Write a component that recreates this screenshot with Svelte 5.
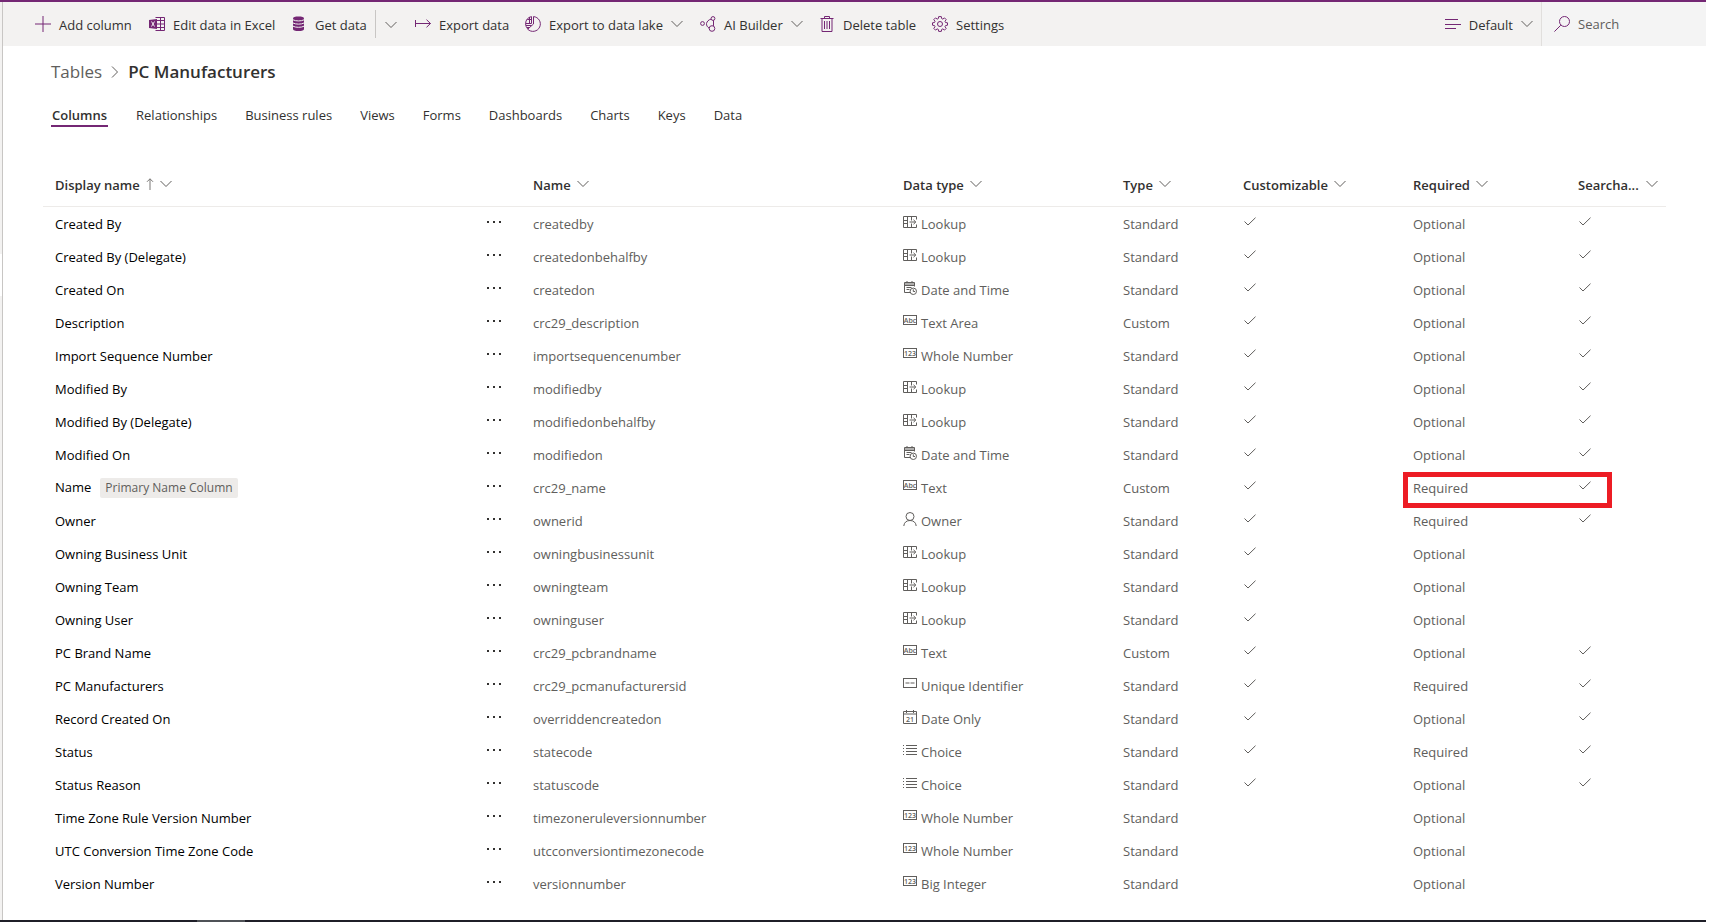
<script>
  const commands = [
    { icon: 'add', label: 'Add column' },
    { icon: 'excel', label: 'Edit data in Excel' },
    { icon: 'database', label: 'Get data' },
    { icon: 'split' },
    { icon: 'export', label: 'Export data' },
    { icon: 'lake', label: 'Export to data lake', menu: true },
    { icon: 'ai', label: 'AI Builder', menu: true },
    { icon: 'trash', label: 'Delete table' },
    { icon: 'gear', label: 'Settings' }
  ];

  const tabs = ['Columns', 'Relationships', 'Business rules', 'Views', 'Forms', 'Dashboards', 'Charts', 'Keys', 'Data'];

  const headers = ['Name', 'Data type', 'Type', 'Customizable', 'Required', 'Searcha...'];

  const row = (display, name, icon, dataType, type, custom, required, search, extra = {}) => ({
    display, name, icon, dataType, type, custom, required, search, ...extra
  });

  const rows = [
    row('Created By', 'createdby', 'lookup', 'Lookup', 'Standard', true, 'Optional', true),
    row('Created By (Delegate)', 'createdonbehalfby', 'lookup', 'Lookup', 'Standard', true, 'Optional', true),
    row('Created On', 'createdon', 'datetime', 'Date and Time', 'Standard', true, 'Optional', true),
    row('Description', 'crc29_description', 'abc', 'Text Area', 'Custom', true, 'Optional', true),
    row('Import Sequence Number', 'importsequencenumber', '123', 'Whole Number', 'Standard', true, 'Optional', true),
    row('Modified By', 'modifiedby', 'lookup', 'Lookup', 'Standard', true, 'Optional', true),
    row('Modified By (Delegate)', 'modifiedonbehalfby', 'lookup', 'Lookup', 'Standard', true, 'Optional', true),
    row('Modified On', 'modifiedon', 'datetime', 'Date and Time', 'Standard', true, 'Optional', true),
    row('Name', 'crc29_name', 'abc', 'Text', 'Custom', true, 'Required', true, { badge: 'Primary Name Column', marked: true }),
    row('Owner', 'ownerid', 'owner', 'Owner', 'Standard', true, 'Required', true),
    row('Owning Business Unit', 'owningbusinessunit', 'lookup', 'Lookup', 'Standard', true, 'Optional', false),
    row('Owning Team', 'owningteam', 'lookup', 'Lookup', 'Standard', true, 'Optional', false),
    row('Owning User', 'owninguser', 'lookup', 'Lookup', 'Standard', true, 'Optional', false),
    row('PC Brand Name', 'crc29_pcbrandname', 'abc', 'Text', 'Custom', true, 'Optional', true),
    row('PC Manufacturers', 'crc29_pcmanufacturersid', 'unique', 'Unique Identifier', 'Standard', true, 'Required', true),
    row('Record Created On', 'overriddencreatedon', 'date', 'Date Only', 'Standard', true, 'Optional', true),
    row('Status', 'statecode', 'choice', 'Choice', 'Standard', true, 'Required', true),
    row('Status Reason', 'statuscode', 'choice', 'Choice', 'Standard', true, 'Optional', true),
    row('Time Zone Rule Version Number', 'timezoneruleversionnumber', '123', 'Whole Number', 'Standard', false, 'Optional', false),
    row('UTC Conversion Time Zone Code', 'utcconversiontimezonecode', '123', 'Whole Number', 'Standard', false, 'Optional', false),
    row('Version Number', 'versionnumber', '123', 'Big Integer', 'Standard', false, 'Optional', false)
  ];
</script>

{#snippet chevron()}
  <svg class="chevron" width="12" height="8" viewBox="0 0 12 8" aria-hidden="true">
    <path d="M.5 1 6 6.500 11.500 1" />
  </svg>
{/snippet}

{#snippet check()}
  <svg class="check" width="12" height="9" viewBox="0 0 12 9" aria-hidden="true">
    <path d="M.5 4.500 4 8 11.500.7" />
  </svg>
{/snippet}

{#snippet commandIcon(name)}
  <svg class="command-icon" width="16" height="16" viewBox="0 0 16 16" aria-hidden="true">
    {#if name === 'add'}
      <path d="M8 0v16M0 8h16" />
    {:else if name === 'excel'}
      <path d="M6.500 1.500h9v13h-9M7 4.500h8.500M7 8h8.500M7 11.500h8.500M11.500 1.500v13" />
      <path class="solid" d="M0 4 8 3v10L0 12z" />
      <path class="cut" d="m2.500 5.500 3 5m0-5-3 5" />
    {:else if name === 'database'}
      <path class="solid" d="M2 2.500C2 1 4 .5 7.500.5s5.500.5 5.500 2v10.500c0 1.500-2 2-5.500 2S2 14.500 2 13z" />
      <path class="cut" d="M2 3.800c2.500 1.500 8.500 1.500 11 0M2 7c2.500 1.500 8.500 1.500 11 0M2 10.200c2.500 1.500 8.500 1.500 11 0" />
    {:else if name === 'export'}
      <path d="M.5 4v7M1 7.500h14.500M11.500 3.700l4 3.800-4 3.800" />
    {:else if name === 'lake'}
      <path d="M8.500.6A7.400 7.400 0 1 1 2.700 13.200L8.500 8zM6.500.6v6.900H.6A7 7 0 0 1 6.500.6zM.6 7.500c0 2.200.8 4 2.100 5.400M4.500 1v6.500M2.300 3.500h4.200M1 9.500h5.500M2 11.500h2.500" />
    {:else if name === 'ai'}
      <circle cx="2.500" cy="7.500" r="1.900" />
      <circle cx="13" cy="2.500" r="1.900" />
      <circle cx="12" cy="12.500" r="2.800" />
      <path d="M11.100 3.100C8.500 3.800 7 5.400 6.500 7.500c-.2 2 .9 3.600 2.700 4.700M13.500 4.400v5.500" />
    {:else if name === 'trash'}
      <path d="M1.500 2.500h13M5.500 2.500v-2h5v2M3 2.500v13h10v-13M5.500 5v8M8 5v8M10.500 5v8" />
    {:else if name === 'gear'}
      <circle cx="8" cy="8" r="2.500" />
      <path d="m6.700.6 2.600 0 .4 2 1.100.5 1.700-1.200 1.700 1.700-1.200 1.700.5 1.200 2 .3v2.400l-2 .4-.5 1.100 1.200 1.700-1.700 1.700-1.700-1.200-1.100.5-.4 2H6.700l-.4-2-1.100-.5-1.700 1.200-1.700-1.700L3 10.700l-.5-1.100-2-.4V6.800l2-.3L3 5.300 1.800 3.600l1.700-1.700 1.700 1.200 1.100-.5z" />
    {:else if name === 'view'}
      <path d="M0 3.500h13M0 8.500h16M0 12.500h11" />
    {:else if name === 'search'}
      <circle cx="10.500" cy="5.500" r="5" />
      <path d="M6.800 9.200.4 15.600" />
    {/if}
  </svg>
{/snippet}

{#snippet typeIcon(name)}
  <svg class="type-icon" width="14" height="14" viewBox="0 0 14 14" aria-hidden="true">
    {#if name === 'lookup'}
      <path d="M13.500 4.500v-3H.5v11h13v-3M.5 5.500h4M.5 8.500h4M4.500 1.500v11M8.500 1.500v4M8.500 8.500v4M6.500 7h6M10.500 4.800 12.800 7l-2.300 2.200" />
    {:else if name === 'datetime'}
      <path d="M7 11.500H1.500v-10h10v4M1.500 4.500h10M1.500 3h10M4 0v2M9 0v2M3.500 6.500h5M3.500 8.500h3" />
      <circle cx="10.300" cy="10.300" r="3.200" />
      <path d="M10.300 8.300v2.200h1.800" />
    {:else if name === 'abc'}
      <rect x=".5" y="1.500" width="13" height="9" />
      <text x="7" y="8.500">Abc</text>
    {:else if name === '123'}
      <rect x=".5" y="1.500" width="13" height="9" />
      <text x="7" y="8.500">123</text>
    {:else if name === 'owner'}
      <circle cx="7" cy="4.500" r="4" />
      <path d="M.8 14C1 10.500 3.500 8.500 7 8.500s6 2 6.200 5.500" />
    {:else if name === 'unique'}
      <rect x=".5" y="1.500" width="13" height="9" />
      <path d="M2.500 6h4M7.500 6h4" />
    {:else if name === 'date'}
      <path d="M.5 1.500h13v12H.5zM.5 4h13M3.500 0v3M10.500 0v3" />
      <text x="7" y="11.500">21</text>
    {:else if name === 'choice'}
      <path d="M3 2.500h11M3 5.500h11M3 8.500h11M3 11.500h11M0 2.500h1M0 5.500h1M0 8.500h1M0 11.500h1" />
    {/if}
  </svg>
{/snippet}

<div class="page">
  <div class="rail"><span class="rail-gap"></span></div>
  <div class="content">
    <header class="toolbar">
      <div class="commands">
        {#each commands as command}
          {#if command.icon === 'split'}
            <button class="split" aria-label="More">{@render chevron()}</button>
          {:else}
            <button class="command">
              {@render commandIcon(command.icon)}
              <span>{command.label}</span>
              {#if command.menu}{@render chevron()}{/if}
            </button>
          {/if}
        {/each}
      </div>
      <button class="command view">
        {@render commandIcon('view')}
        <span>Default</span>
        {@render chevron()}
      </button>
      <label class="search">
        {@render commandIcon('search')}
        <input type="search" placeholder="Search" aria-label="Search" />
      </label>
    </header>

    <main>
      <nav class="breadcrumb">
        <a href="#tables">Tables</a>
        <svg width="8" height="12" viewBox="0 0 8 12" aria-hidden="true"><path d="M1 .5 6.500 6 1 11.500" /></svg>
        <h1>PC Manufacturers</h1>
      </nav>

      <div class="tabs" role="tablist">
        {#each tabs as tab, i}
          <button role="tab" aria-selected={i === 0} class:active={i === 0}>{tab}</button>
        {/each}
      </div>

      <table>
        <colgroup>
          <col />
          <col class="w-menu" />
          <col class="w-name" />
          <col class="w-data" />
          <col class="w-type" />
          <col class="w-custom" />
          <col class="w-required" />
          <col class="w-search" />
        </colgroup>
        <thead>
          <tr>
            <th colspan="2">
              <button>
                <span>Display name</span>
                <svg class="sort" width="8" height="12" viewBox="0 0 8 12" aria-hidden="true"><path d="M4 12V.8M1 3.800 4 .8l3 3" /></svg>
                {@render chevron()}
              </button>
            </th>
            {#each headers as header, i}
              <th><button class:spread={i === 5}><span>{header}</span>{@render chevron()}</button></th>
            {/each}
          </tr>
        </thead>
        <tbody>
          {#each rows as r}
            <tr>
              <td class="display">{r.display}{#if r.badge}<span class="badge">{r.badge}</span>{/if}</td>
              <td>
                <button class="more" aria-label="More actions">
                  <svg width="14" height="2" viewBox="0 0 14 2" aria-hidden="true"><path d="M0 0h2v2H0zM6 0h2v2H6zM12 0h2v2h-2z" /></svg>
                </button>
              </td>
              <td>{r.name}</td>
              <td><span class="data-type">{@render typeIcon(r.icon)}{r.dataType}</span></td>
              <td>{r.type}</td>
              <td>{#if r.custom}{@render check()}{/if}</td>
              <td class="required">{r.required}{#if r.marked}<span class="marker"></span>{/if}</td>
              <td>{#if r.search}{@render check()}{/if}</td>
            </tr>
          {/each}
        </tbody>
      </table>
    </main>
  </div>
  <footer><span></span></footer>
</div>

<style>
  :global(body) {
    background: #fff;
  }

  .page {
    display: grid;
    grid-template: 1fr 2px / 3px minmax(0, 1fr);
    min-height: 920px;
    margin-right: 14px;
    border-top: 2px solid #742774;
    font-family: 'Segoe UI', 'Open Sans', 'Noto Sans', sans-serif;
    font-size: 13px;
    line-height: 18px;
    color: #323130;
  }

  .rail {
    display: flex;
    flex-direction: column;
    padding-top: 252px;
    background: #f3f2f1;
    border-right: 1px solid #c8c6c4;
  }

  .rail-gap {
    height: 42px;
    background: #fff;
  }

  button {
    padding: 0;
    border: 0;
    background: none;
    font: inherit;
    color: inherit;
    white-space: nowrap;
    cursor: pointer;
  }

  svg {
    flex: none;
    fill: none;
    stroke: #605e5c;
  }

  .toolbar {
    display: flex;
    height: 44px;
    background: #f3f2f1;
  }

  .commands {
    display: grid;
    flex: 1;
    grid-template-columns: 114px 142px 84px 40px 110px 175px 119px 113px 84px;
    padding-left: 32px;
  }

  .command {
    display: flex;
    align-items: center;
    gap: 8px;
    text-align: left;
  }

  .command span,
  th span {
    padding-top: 2px;
  }

  .command-icon {
    stroke: #742774;
  }

  .command-icon .solid {
    fill: #742774;
    stroke: none;
  }

  .command-icon .cut {
    stroke: #f3f2f1;
  }

  .split {
    height: 28px;
    margin: auto 0;
    padding-left: 9px;
    border-left: 1px solid #c8c6c4;
    text-align: left;
  }

  .view {
    padding-right: 8px;
  }

  .search {
    display: flex;
    align-items: center;
    gap: 8px;
    width: 152px;
    padding-left: 12px;
    border-left: 1px solid #e1dfdd;
    background: #f4f4f4;
  }

  .search input {
    flex: 1;
    min-width: 0;
    padding: 0;
    border: 0;
    outline: 0;
    background: none;
    font: inherit;
    color: #323130;
  }

  .search input::placeholder {
    color: #605e5c;
    opacity: 1;
  }

  main {
    padding: 14px 40px 19px;
  }

  .breadcrumb {
    display: flex;
    align-items: center;
    gap: 9px;
    padding-left: 8px;
    font-size: 17px;
    line-height: 24px;
  }

  .breadcrumb a {
    color: #605e5c;
    text-decoration: none;
  }

  h1 {
    margin: 0;
    font-size: 17px;
    font-weight: 600;
  }

  .tabs {
    display: flex;
    gap: 28px;
    margin-top: 20px;
    padding-left: 8px;
  }

  .tabs button {
    height: 23px;
    border-bottom: 2px solid transparent;
    line-height: 18px;
  }

  .tabs .active {
    padding: 0 1px;
    border-color: #742774;
    font-weight: 600;
  }

  table {
    width: 100%;
    margin-top: 35px;
    border-collapse: separate;
    border-spacing: 0;
    table-layout: fixed;
  }

  .w-menu { width: 46px; }
  .w-name { width: 370px; }
  .w-data { width: 220px; }
  .w-type { width: 120px; }
  .w-custom { width: 170px; }
  .w-required { width: 165px; }
  .w-search { width: 100px; }

  th {
    height: 44px;
    padding: 0 8px 0 12px;
    border-bottom: 1px solid #edebe9;
    text-align: left;
  }

  th button {
    display: flex;
    align-items: center;
    gap: 6px;
    font-weight: 600;
  }

  th .spread {
    justify-content: space-between;
    width: 100%;
  }

  .sort {
    stroke: #797775;
  }

  td {
    height: 33px;
    padding: 0 0 0 12px;
    color: #605e5c;
    white-space: nowrap;
  }

  .display {
    color: #000;
  }

  .badge {
    display: inline-block;
    margin-left: 9px;
    padding: 0 5px;
    border-radius: 2px;
    background: #edebe9;
    color: #605e5c;
    font-size: 12px;
    line-height: 20px;
  }

  .more {
    display: flex;
    align-items: center;
    height: 12px;
    margin-bottom: 4px;
  }

  .more path {
    fill: #323130;
    stroke: none;
  }

  .check {
    display: block;
    margin: 0 0 4px 1px;
  }

  .data-type {
    display: flex;
    align-items: center;
    gap: 4px;
  }

  .type-icon {
    margin-bottom: 4px;
  }

  .type-icon text {
    fill: #605e5c;
    stroke: none;
    font-size: 7px;
    font-weight: 600;
    text-anchor: middle;
  }

  .required {
    position: relative;
  }

  .marker {
    position: absolute;
    top: 1px;
    left: 2px;
    box-sizing: border-box;
    width: 209px;
    height: 36px;
    border: 5px solid #ed1c24;
    pointer-events: none;
  }

  footer {
    grid-column: 1 / -1;
    display: flex;
    padding-left: 197px;
    background: #1f1f28;
  }

  footer span {
    width: 48px;
    background: #4f5257;
  }
</style>
